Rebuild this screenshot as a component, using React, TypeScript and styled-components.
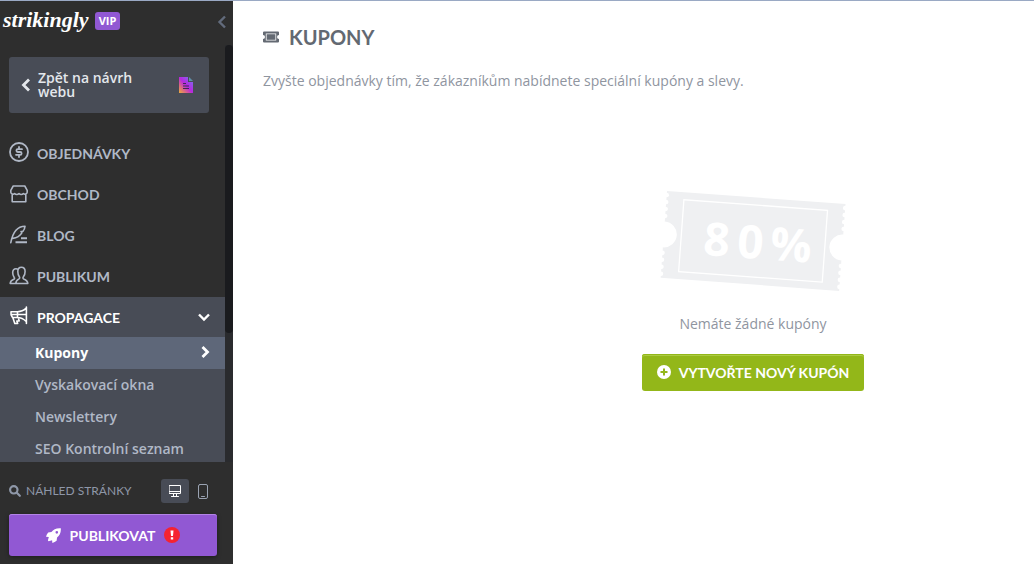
import React from "react";
import styled, { createGlobalStyle, css } from "styled-components";

const display = css`
  font-family: Lato, "Liberation Sans", sans-serif;
`;

const GlobalStyle = createGlobalStyle`
  *, *::before, *::after { box-sizing: border-box; }
  body {
    margin: 0;
    background: #fff;
    font-family: "Open Sans", "Noto Sans", sans-serif;
    font-size: 14px;
    color: #8f959f;
  }
  button { font: inherit; border: 0; cursor: pointer; }
  a { color: inherit; text-decoration: none; }
  ul { list-style: none; margin: 0; padding: 0; }
  svg { display: block; flex: none; }
`;

const Shell = styled.div`
  display: flex;
  height: 100vh;
  border-top: 1px solid #9aa9c4;
  overflow: hidden;
`;

const Sidebar = styled.aside`
  flex: none;
  width: 233px;
  display: flex;
  flex-direction: column;
  background: #2e2e2e;
  color: #b0b8c6;
`;

const Brand = styled.header`
  flex: none;
  display: flex;
  align-items: flex-start;
  height: 44px;
  padding: 6px 4px 0 3px;
`;

const Logo = styled.a`
  width: 84px;
  margin-right: 8px;
  font-family: "Liberation Serif", serif;
  font-size: 22px;
  line-height: 26px;
  font-weight: 700;
  font-style: italic;
  color: #fff;
`;

const VipTag = styled.span`
  width: 25px;
  height: 18px;
  margin-top: 5px;
  border-radius: 3px;
  background: #9158d3;
  color: #fff;
  font-size: 11px;
  line-height: 18px;
  font-weight: 700;
  text-align: center;
`;

const Collapse = styled.button`
  margin: 8px 0 0 auto;
  padding: 0;
  background: none;
  color: #626b7c;
`;

const ScrollRow = styled.div`
  flex: 1;
  min-height: 0;
  display: flex;
`;

const ScrollArea = styled.div`
  flex: 1;
  overflow: hidden;
`;

const ScrollTrack = styled.div`
  width: 8px;
  background: #2a2b2e;
`;

const ScrollThumb = styled.div`
  height: 69%;
  border-radius: 4px;
  background: #1a1b1e;
`;

const BackButton = styled.button`
  display: flex;
  align-items: center;
  width: 200px;
  height: 56px;
  margin: 12px 9px 20px;
  padding: 0 16px 0 10px;
  border-radius: 3px;
  background: #484c56;
  color: #e4e7ec;
  font-weight: 600;
  line-height: 14px;
  text-align: left;
`;

const BackLabel = styled.span`
  flex: 1;
  padding: 0 24px 0 5px;
`;

const NavLink = styled.a<{ $open?: boolean }>`
  ${display}
  display: flex;
  align-items: center;
  gap: 8px;
  height: ${(p) => (p.$open ? 40 : 41)}px;
  padding: 0 14px 0 9px;
  background: ${(p) => (p.$open ? "#484c56" : "transparent")};
  color: ${(p) => (p.$open ? "#fff" : "#b0b8c6")};
  font-size: 14px;
  font-weight: 700;
`;

const NavIcon = styled.span`
  padding-bottom: 4px;
`;

const NavText = styled.span`
  flex: 1;
`;

const SubList = styled.ul`
  background: #484c56;
`;

const SubLink = styled.a<{ $active?: boolean }>`
  display: flex;
  align-items: center;
  justify-content: space-between;
  height: 32px;
  padding: 0 13px 2px 35px;
  background: ${(p) => (p.$active ? "#5e6779" : "transparent")};
  color: ${(p) => (p.$active ? "#fff" : "#b0b8c6")};
  font-weight: ${(p) => (p.$active ? 700 : 600)};
`;

const Footer = styled.footer`
  flex: none;
  padding: 17px 16px 8px 9px;
`;

const PreviewRow = styled.div`
  ${display}
  display: flex;
  align-items: center;
  height: 24px;
  margin-bottom: 11px;
  color: #8e97a8;
  font-size: 12px;
`;

const PreviewLabel = styled.span`
  flex: 1;
  padding: 0 0 2px 5px;
`;

const DeviceButton = styled.button<{ $on?: boolean }>`
  display: flex;
  align-items: center;
  justify-content: center;
  width: 28px;
  height: 24px;
  padding: 0;
  border-radius: 3px;
  background: ${(p) => (p.$on ? "#484c56" : "transparent")};
  color: ${(p) => (p.$on ? "#fff" : "#9aa3b2")};
`;

const ActionButton = styled.button<{ $tone: "purple" | "green" }>`
  display: flex;
  align-items: center;
  justify-content: center;
  border-radius: 3px;
  color: #fff;
  && {
    ${display}
    font-size: 14px;
    font-weight: 700;
  }
  ${(p) =>
    p.$tone === "purple"
      ? css`
          gap: 9px;
          width: 100%;
          height: 42px;
          background: #9158d3;
          box-shadow: inset 0 1px 0 #b384e6, 0 1px 4px rgba(0, 0, 0, 0.4);
        `
      : css`
          gap: 8px;
          height: 37px;
          padding: 0 15px 1px;
          background: #93b719;
          box-shadow: inset 0 1px 0 #93b719, inset 0 2px 0 #accb43;
        `}
`;

const Main = styled.main`
  flex: 1;
  min-width: 0;
  overflow: hidden;
  padding: 22px 30px;
`;

const Content = styled.div`
  min-width: 980px;
`;

const Title = styled.h1`
  ${display}
  display: flex;
  align-items: center;
  gap: 10px;
  margin: 0 0 18px;
  color: #636972;
  font-size: 20px;
  line-height: 28px;
  font-weight: 700;
`;

const Intro = styled.p`
  margin: 0;
  line-height: 24px;
`;

const EmptyState = styled.section`
  display: flex;
  flex-direction: column;
  align-items: center;
  padding-top: 97px;
`;

const EmptyText = styled.p`
  margin: 21px 0 18px;
  line-height: 24px;
`;

const Line = (p: React.SVGProps<SVGSVGElement>) => (
  <svg
    width="20"
    height="20"
    viewBox="0 0 20 20"
    fill="none"
    stroke="currentColor"
    strokeWidth="1.6"
    strokeLinejoin="round"
    strokeLinecap="round"
    aria-hidden="true"
    {...p}
  />
);

const chevrons = {
  left: "M10 1.500 4.500 7l5.500 5.500",
  right: "M4.500 2 9.500 7l-5 5",
  down: "M2 4.500l5 5 5-5",
};

const Chevron = ({ dir, weight = 2.4, size = 14 }: { dir: keyof typeof chevrons; weight?: number; size?: number }) => (
  <Line width={size} height={size} viewBox="0 0 14 14" strokeWidth={weight} strokeLinecap="butt" strokeLinejoin="miter">
    <path d={chevrons[dir]} />
  </Line>
);

const OrdersIcon = () => (
  <Line strokeWidth="1.8">
    <circle cx="10" cy="10" r="9" />
    <path d="M13 7.200H8.800a1.400 1.400 0 0 0 0 2.800h2.400a1.400 1.400 0 0 1 0 2.800H7M10 5v2M10 13v2" />
  </Line>
);

const StoreIcon = () => (
  <Line>
    <path d="M4.200 3h11.600l2.400 4.300v1.900a2.200 2.200 0 0 1-3.800 1.300 2.900 2.900 0 0 1-4.400 0 2.900 2.900 0 0 1-4.400 0A2.200 2.200 0 0 1 1.800 9.200V7.300zM3.200 11.500v7.200h13.600v-7.200" />
  </Line>
);

const BlogIcon = () => (
  <Line>
    <path d="M1.800 18.700C3.500 9.500 7 2.200 16 2.200c-.2 2.300-.9 3.800-2 5l-2 .3 1 1.200c-2 3.500-4.500 5.300-9.300 5.700" />
    <path d="M12 14.200h6M6.500 18.200H18" strokeWidth="2" strokeLinecap="butt" />
  </Line>
);

const AudienceIcon = () => (
  <Line>
    <path d="M6.800 18.500h12c0-2.600-1.600-3.600-4.100-4.600-.9-.4-.9-1.300-.3-2.100 1.200-1.500 1.700-3.300 1.700-5.200 0-2.700-1.500-4.300-3.700-4.300S8.800 3.900 8.800 6.600c0 1.900.4 3.700 1.500 5.200.6.800.5 1.600-.3 2.100-1.900 1-3.200 2-3.200 4.600zM6.800 18.500H1.200c0-2.300 1.300-3.200 3.600-4.200.9-.4.9-1.100.4-1.800C4.200 11 3.700 9.500 3.700 7.700 3.700 5.300 5 3.800 7 3.800c.8 0 1.500.2 2 .7" />
  </Line>
);

const MegaphoneIcon = () => (
  <Line>
    <path d="M17.400 2v16.500M17.200 3.200C14.500 5.800 12 6.700 8.500 6.700H2c-.4 2 .2 4.300 1.500 5.800h5c3.500 0 6.200 1.500 8.700 4M8.500 6.700v5.800M3.800 12.500l2 6h2.900l-.9-2.500h2.400l-1-3.500M2 9.500h15" />
  </Line>
);

const PageIcon = () => (
  <svg width="14" height="16" viewBox="0 0 14 16" aria-hidden="true">
    <defs>
      <linearGradient id="page" x1="0" y1="1" x2="1" y2="0">
        <stop offset="0" stopColor="#e8b03a" />
        <stop offset=".25" stopColor="#dc6a80" />
        <stop offset=".5" stopColor="#b727df" />
        <stop offset="1" stopColor="#6f7cf5" />
      </linearGradient>
    </defs>
    <path d="M0 0h9v5h5v11H0z" fill="url(#page)" />
    <path d="M10 0l4 4h-4z" fill="#5f8fa8" />
    <path d="M4 6.500h3M4 9h6M4 11.500h6" stroke="#3d2a55" strokeWidth="1.200" />
  </svg>
);

const SearchIcon = () => (
  <Line width="12" height="12" viewBox="0 0 12 12" strokeWidth="2.200">
    <circle cx="4.800" cy="4.800" r="3.700" />
    <path d="M7.800 7.800 10.800 10.800" />
  </Line>
);

const DesktopIcon = () => (
  <Line width="12" height="12" viewBox="0 0 12 12" strokeWidth="1" strokeLinejoin="miter">
    <path d="M.5.5h11v8H.5zM.5 6.500h11M4.500 8.500v3M7.500 8.500v3M2.500 11.500h7" />
  </Line>
);

const PhoneIcon = () => (
  <Line width="10" height="15" viewBox="0 0 10 15" strokeWidth="1">
    <rect x=".5" y=".5" width="9" height="14" rx="1.500" />
    <path d="M3.500 12.500h3" />
  </Line>
);

const RocketIcon = () => (
  <svg width="15" height="15" viewBox="0 0 16 16" fill="#fff" aria-hidden="true">
    <path
      fillRule="evenodd"
      d="M15.800.2C11-.2 8 1.500 5.800 4.200L2.300 4.700C1.200 6 .4 7.500 0 9.200l3 .3-1 3.800.8.800 3.700-1.100.3 3c1.700-.4 3.200-1.200 4.500-2.300l.5-3.500C14.500 8 16.200 5 15.800.2zM11.500 3.200a1.400 1.400 0 1 1 0 2.800 1.400 1.400 0 0 1 0-2.800z"
    />
  </svg>
);

const AlertIcon = () => (
  <svg width="16" height="16" viewBox="0 0 16 16" role="img" aria-label="Upozornění">
    <circle cx="8" cy="8" r="8" fill="#f52331" />
    <path d="M6.500 3.500h3L9 9H7zM6.800 10.200h2.400v2.400H6.800z" fill="#fff" />
  </svg>
);

const PlusIcon = () => (
  <svg width="14" height="14" viewBox="0 0 14 14" aria-hidden="true">
    <circle cx="7" cy="7" r="7" fill="#fff" />
    <path d="M7 3.500v7M3.500 7h7" stroke="#93b719" strokeWidth="2" />
  </svg>
);

const CouponIcon = () => (
  <svg width="16" height="12" viewBox="0 0 16 12" fill="#636972" aria-hidden="true">
    <path
      fillRule="evenodd"
      d="M1 .5h14a1 1 0 0 1 1 1V4a2 2 0 0 0 0 4v2.500a1 1 0 0 1-1 1H1a1 1 0 0 1-1-1V8a2 2 0 0 0 0-4V1.500a1 1 0 0 1 1-1zM2.800 2.400v7.200h10.400V2.400z"
    />
    <path d="M3.600 3.200h8.800v5.600H3.600z" />
  </svg>
);

const scallops = [4, 11, 18, 25, 62, 69, 76, 83];

const Ticket = () => (
  <svg width="187" height="101" viewBox="0 0 187 101" role="img" aria-label="80%">
    <g transform="translate(7 1) rotate(4.200)">
      <path d="M0 0H179V87H0z" fill="#eff0f2" />
      <g fill="#fff">
        {[0, 179].map((x) => (
          <React.Fragment key={x}>
            <circle cx={x} cy="43.500" r="13" />
            {scallops.map((y) => (
              <circle key={y} cx={x} cy={y} r="2.300" />
            ))}
          </React.Fragment>
        ))}
      </g>
      <rect x="17.500" y="7.500" width="144" height="72" fill="none" stroke="#fff" strokeWidth="1.300" />
      <text x="40 74 107" y="61" fill="#fff" fontSize="46" fontWeight="700">
        80%
      </text>
    </g>
  </svg>
);

const sections = [
  { label: "OBJEDNÁVKY", icon: <OrdersIcon /> },
  { label: "OBCHOD", icon: <StoreIcon /> },
  { label: "BLOG", icon: <BlogIcon /> },
  { label: "PUBLIKUM", icon: <AudienceIcon /> },
];

const promotion = ["Kupony", "Vyskakovací okna", "Newslettery", "SEO Kontrolní seznam"];

export default function App() {
  return (
    <>
      <GlobalStyle />
      <Shell>
        <Sidebar>
          <Brand>
            <Logo href="#">strikingly</Logo>
            <VipTag>VIP</VipTag>
            <Collapse aria-label="Sbalit panel">
              <Chevron dir="left" weight={2.4} />
            </Collapse>
          </Brand>
          <ScrollRow>
            <ScrollArea>
              <BackButton>
                <Chevron dir="left" weight={2.8} />
                <BackLabel>Zpět na návrh webu</BackLabel>
                <PageIcon />
              </BackButton>
              <nav>
                <ul>
                  {sections.map((s) => (
                    <li key={s.label}>
                      <NavLink href="#">
                        <NavIcon>{s.icon}</NavIcon>
                        <NavText>{s.label}</NavText>
                      </NavLink>
                    </li>
                  ))}
                  <li>
                    <NavLink href="#" $open>
                      <NavIcon>
                        <MegaphoneIcon />
                      </NavIcon>
                      <NavText>PROPAGACE</NavText>
                      <Chevron dir="down" />
                    </NavLink>
                    <SubList>
                      {promotion.map((label, i) => (
                        <li key={label}>
                          <SubLink href="#" $active={i === 0}>
                            {label}
                            {i === 0 && <Chevron dir="right" weight={2.8} />}
                          </SubLink>
                        </li>
                      ))}
                    </SubList>
                  </li>
                </ul>
              </nav>
            </ScrollArea>
            <ScrollTrack>
              <ScrollThumb />
            </ScrollTrack>
          </ScrollRow>
          <Footer>
            <PreviewRow>
              <SearchIcon />
              <PreviewLabel>NÁHLED STRÁNKY</PreviewLabel>
              <DeviceButton $on aria-label="Počítač">
                <DesktopIcon />
              </DeviceButton>
              <DeviceButton aria-label="Mobil">
                <PhoneIcon />
              </DeviceButton>
            </PreviewRow>
            <ActionButton $tone="purple">
              <RocketIcon />
              PUBLIKOVAT
              <AlertIcon />
            </ActionButton>
          </Footer>
        </Sidebar>
        <Main>
          <Content>
            <Title>
              <CouponIcon />
              KUPONY
            </Title>
            <Intro>Zvyšte objednávky tím, že zákazníkům nabídnete speciální kupóny a slevy.</Intro>
            <EmptyState>
              <Ticket />
              <EmptyText>Nemáte žádné kupóny</EmptyText>
              <ActionButton $tone="green">
                <PlusIcon />
                VYTVOŘTE NOVÝ KUPÓN
              </ActionButton>
            </EmptyState>
          </Content>
        </Main>
      </Shell>
    </>
  );
}
